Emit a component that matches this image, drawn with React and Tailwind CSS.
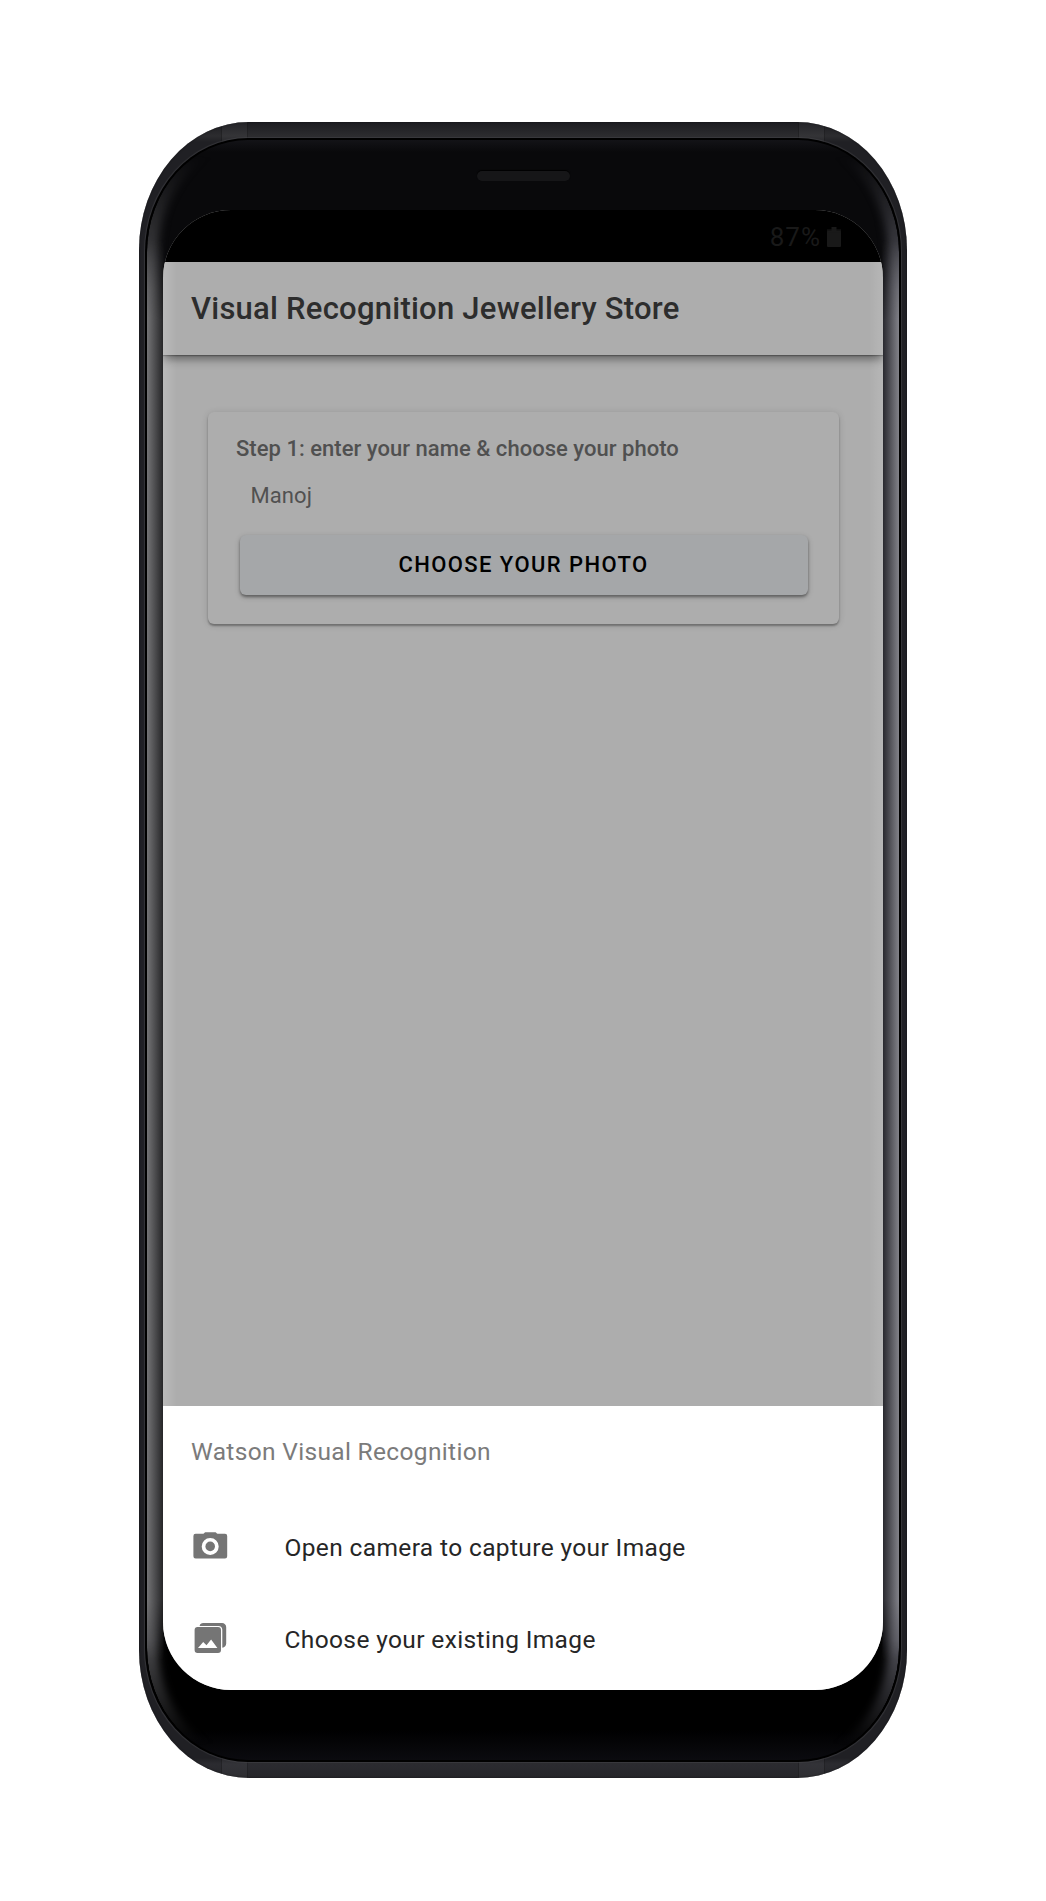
function CameraIcon() {
  return (
    <svg className="h-[36px] w-[36px] shrink-0" viewBox="0 0 36 36" fill="#757575">
      <path
        fillRule="evenodd"
        d="M13.3 4.2h10.2c.7 0 1.2 1.5 2 1.5H33a2.2 2.2 0 0 1 2.2 2.2v20.4a2.2 2.2 0 0 1-2.2 2.2H3.6a2.2 2.2 0 0 1-2.2-2.2V7.9a2.2 2.2 0 0 1 2.2-2.2h7.7c.8 0 1.3-1.5 2-1.5ZM18.2 9.9a8.500 8.500 0 1 0 0 17a8.500 8.500 0 0 0 0-17Z"
      />
      <circle cx="18.2" cy="18.4" r="4.8" />
    </svg>
  );
}

function PhotosIcon() {
  return (
    <svg className="h-[36px] w-[36px] shrink-0" viewBox="0 0 36 36" fill="#757575">
      <path d="M7.6 5.9c.4-1.8 1.8-2.8 3.6-2.8h18.800a4.200 4.200 0 0 1 4.200 4.200v16.300c0 2.200-1.400 3.900-3.900 4.200V9.700c0-2.200-1.500-3.800-3.800-3.800Z" />
      <path
        fillRule="evenodd"
        d="M5.600 7H26a3 3 0 0 1 3 3v20a3 3 0 0 1-3 3H5.600a3 3 0 0 1-3-3V10a3 3 0 0 1 3-3ZM6 28h19.400l-6.300-8.400-4.600 5.700-3.300-3.300Z"
      />
    </svg>
  );
}

function BatteryIcon() {
  return (
    <svg className="h-5 w-[14px]" viewBox="0 0 14 20" fill="#191919">
      <path d="M4.5 0h5v4H13a1 1 0 0 1 1 1v14a1 1 0 0 1-1 1H1a1 1 0 0 1-1-1V5a1 1 0 0 1 1-1h3.5Z" />
      <path d="M0 2.200h14v3H0Z" opacity="0.700" />
    </svg>
  );
}

const options = [
  { label: "Open camera to capture your Image", Icon: CameraIcon },
  { label: "Choose your existing Image", Icon: PhotosIcon },
];

function Seam({ className }) {
  return (
    <span
      className={`absolute h-[26px] w-[27px] border-x border-black/30 bg-white/4 ${className}`}
    />
  );
}

function StatusBar() {
  return (
    <div className="flex h-[52px] shrink-0 items-center justify-end gap-[6px] bg-black pr-[42px] pt-[2px]">
      <span className="text-[26px] leading-[30px] tracking-[1px] text-[#191919]">87%</span>
      <BatteryIcon />
    </div>
  );
}

function Toolbar() {
  return (
    <header className="relative flex h-[93px] shrink-0 items-center bg-[#adadad] pl-[28px] shadow-[0_1px_1px_rgba(0,0,0,0.250),0_4px_9px_rgba(0,0,0,0.450)]">
      <h1 className="text-[31px] font-medium leading-10 tracking-[0.240px] text-[#2d2d2d]">
        Visual Recognition Jewellery Store
      </h1>
    </header>
  );
}

function StepCard() {
  return (
    <section className="mx-auto mt-[57px] flex h-[212px] w-[631px] flex-col rounded-[6px] bg-[#adadad] px-[28px] pt-[23px] shadow-[0_2px_2px_rgba(0,0,0,0.300),0_1px_7px_rgba(0,0,0,0.140)]">
      <h2 className="pl-[0.5px] text-[22px] font-medium leading-[27px] tracking-[0.030px] text-[#505050]">
        Step 1: enter your name &amp; choose your photo
      </h2>
      <p className="mt-5 pl-[15px] text-[22px] leading-[27px] tracking-[0.100px] text-[#515151]">
        Manoj
      </p>
      <button className="ml-[4px] mt-[26px] flex h-[60px] w-[568px] items-center justify-center rounded-[6px] bg-[#a5a7a9] pb-[2px] text-[22px] font-medium tracking-[1.420px] text-black shadow-[0_2px_3px_rgba(0,0,0,0.380),0_2px_6px_rgba(0,0,0,0.160)]">
        CHOOSE YOUR PHOTO
      </button>
    </section>
  );
}

function ActionSheet() {
  return (
    <div className="relative flex h-[284px] shrink-0 flex-col bg-white">
      <h3 className="flex h-[94px] items-center pb-[1px] pl-[28px] text-[24.5px] tracking-[0.330px] text-[#7b7b7b]">
        Watson Visual Recognition
      </h3>
      {options.map(({ label, Icon }) => (
        <button key={label} className="flex h-[92px] items-center pl-[29px] text-left">
          <Icon />
          <span className="ml-[56.5px] pt-[3px] text-[24.5px] leading-[30px] tracking-[0.370px] text-[#262626]">
            {label}
          </span>
        </button>
      ))}
    </div>
  );
}

function Screen() {
  return (
    <div className="relative flex h-[1480px] w-[720px] flex-col overflow-hidden rounded-[68px/68px] bg-[#adadad]">
      <StatusBar />
      <Toolbar />
      <main className="min-h-0 flex-1">
        <StepCard />
      </main>
      <ActionSheet />
      <div className="pointer-events-none absolute inset-x-0 bottom-[284px] top-[52px] bg-[linear-gradient(to_right,rgba(255,255,255,0.160),transparent_14px,transparent_706px,rgba(255,255,255,0.120))]" />
    </div>
  );
}

export default function App() {
  return (
    <div className="flex min-h-[1901px] justify-center bg-white pt-[122px] font-[Roboto,sans-serif]">
      <div className="relative h-[1656px] w-[768px] overflow-hidden rounded-[110px/128px] bg-[linear-gradient(to_bottom,#1c1c20,#2c2c2f_14px,#202024_20px,#202026_50%,#202024_1636px,#2b2b30_1642px,#26262a)] px-[6px] py-[16px] shadow-[inset_0_0_2px_#101013]">
        <Seam className="left-[82px] top-0" />
        <Seam className="right-[82px] top-0" />
        <Seam className="bottom-0 left-[82px]" />
        <Seam className="bottom-0 right-[82px]" />
        <div className="relative h-full rounded-[103px/114px] bg-black p-[2px] shadow-[0_0_1px_1px_rgba(80,80,84,0.450)]">
          <div className="relative flex h-full flex-col items-center overflow-hidden rounded-[101px/112px] bg-[linear-gradient(to_bottom,#131317,#09090b_12px,#09090b_125px,#000_180px,#000_1590px,#0b0b0f)]">
            <div className="absolute inset-0 rounded-[101px/112px] shadow-[inset_14px_0_8px_-3px_#4c4c4f,inset_-14px_0_8px_-3px_#53535b] [mask-image:linear-gradient(to_bottom,transparent_16px,black_150px,black_1500px,transparent_1605px)]" />
            <div className="absolute inset-x-0 inset-y-[100px] bg-[linear-gradient(to_right,#747476,#262628_16px,transparent_17px,transparent_735px,#29292f_736px,#828289)] [mask-image:linear-gradient(to_bottom,transparent,black_80px,black_1360px,transparent)]" />
            <div className="relative flex h-[70px] w-full shrink-0 justify-center pt-[31px]">
              <span className="h-[10px] w-[93px] rounded-full bg-[#161618] shadow-[0_-1px_1px_#000]" />
            </div>
            <Screen />
          </div>
        </div>
      </div>
    </div>
  );
}
